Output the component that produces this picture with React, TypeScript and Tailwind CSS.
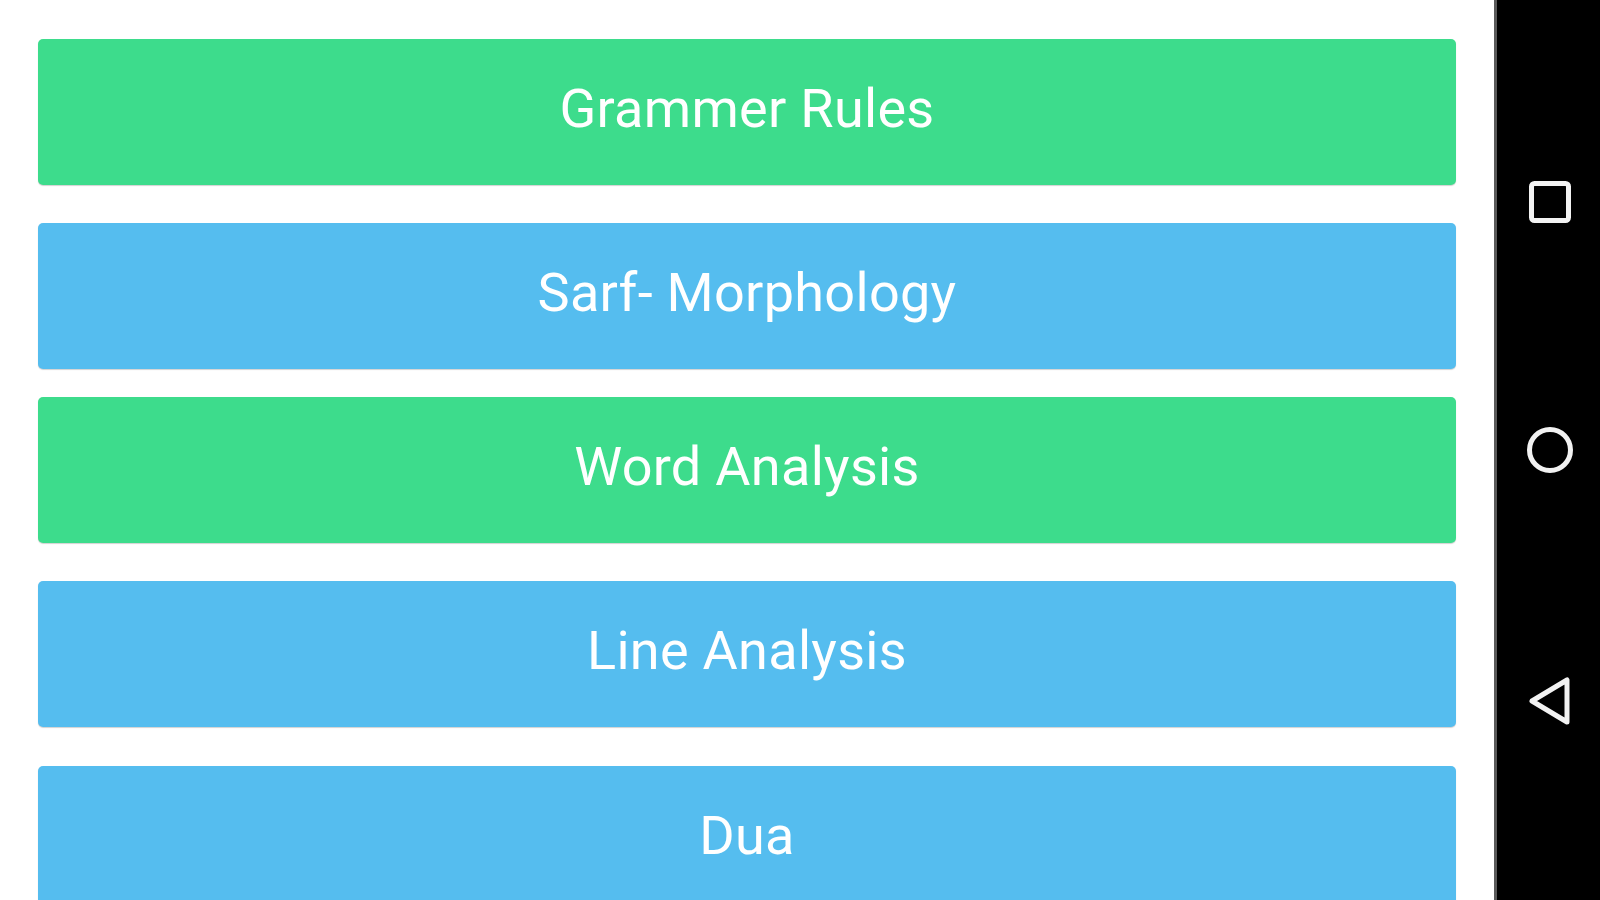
import React from 'react';

const menuItems = [
  { label: 'Grammer Rules', tone: 'green', spacing: 'mt-[39px]' },
  { label: 'Sarf- Morphology', tone: 'blue', spacing: 'mt-[38px]' },
  { label: 'Word Analysis', tone: 'green', spacing: 'mt-[28px]' },
  { label: 'Line Analysis', tone: 'blue', spacing: 'mt-[38px]' },
  { label: 'Dua', tone: 'blue', spacing: 'mt-[39px]' }
];

const NavBar: React.FC = () => (
  <div className="w-[106px] h-full shrink-0 bg-black border-l-[3px] border-[#5a5a5a] flex flex-col items-center justify-center gap-[202px] pl-[2px] pt-[5px]">
    {/* recents */}
    <svg width="44" height="44" viewBox="0 0 44 44">
      <rect x="3.5" y="3.5" width="37" height="37" rx="3" fill="none" stroke="#f2f2f2" strokeWidth="5" />
    </svg>
    {/* home */}
    <svg width="48" height="48" viewBox="0 0 48 48">
      <circle cx="24" cy="24" r="20.5" fill="none" stroke="#f2f2f2" strokeWidth="5" />
    </svg>
    {/* back */}
    <svg width="46" height="50" viewBox="0 0 46 50">
      <path d="M40 4 L40 46 L5 25 Z" fill="none" stroke="#f2f2f2" strokeWidth="5" strokeLinejoin="round" />
    </svg>
  </div>
);

export default function App() {
  return (
    <div className="w-[1600px] h-[900px] overflow-hidden flex bg-white" style={{ fontFamily: 'Roboto, "Noto Sans", sans-serif' }}>
      <div className="flex-1 flex flex-col px-[38px] overflow-hidden">
        {menuItems.map((item) => (
          <button
            key={item.label}
            className={`${item.spacing} h-[146px] shrink-0 w-full rounded-[5px] flex items-center justify-center pb-[8px] text-white text-[54px] font-normal tracking-[0.3px] shadow-[0_1px_1px_rgba(0,0,0,0.18)] ${
              item.tone === 'green' ? 'bg-[#3ddc8c]' : 'bg-[#55bdef]'
            }`}
          >
            {item.label}
          </button>
        ))}
      </div>
      <NavBar />
    </div>
  );
}
